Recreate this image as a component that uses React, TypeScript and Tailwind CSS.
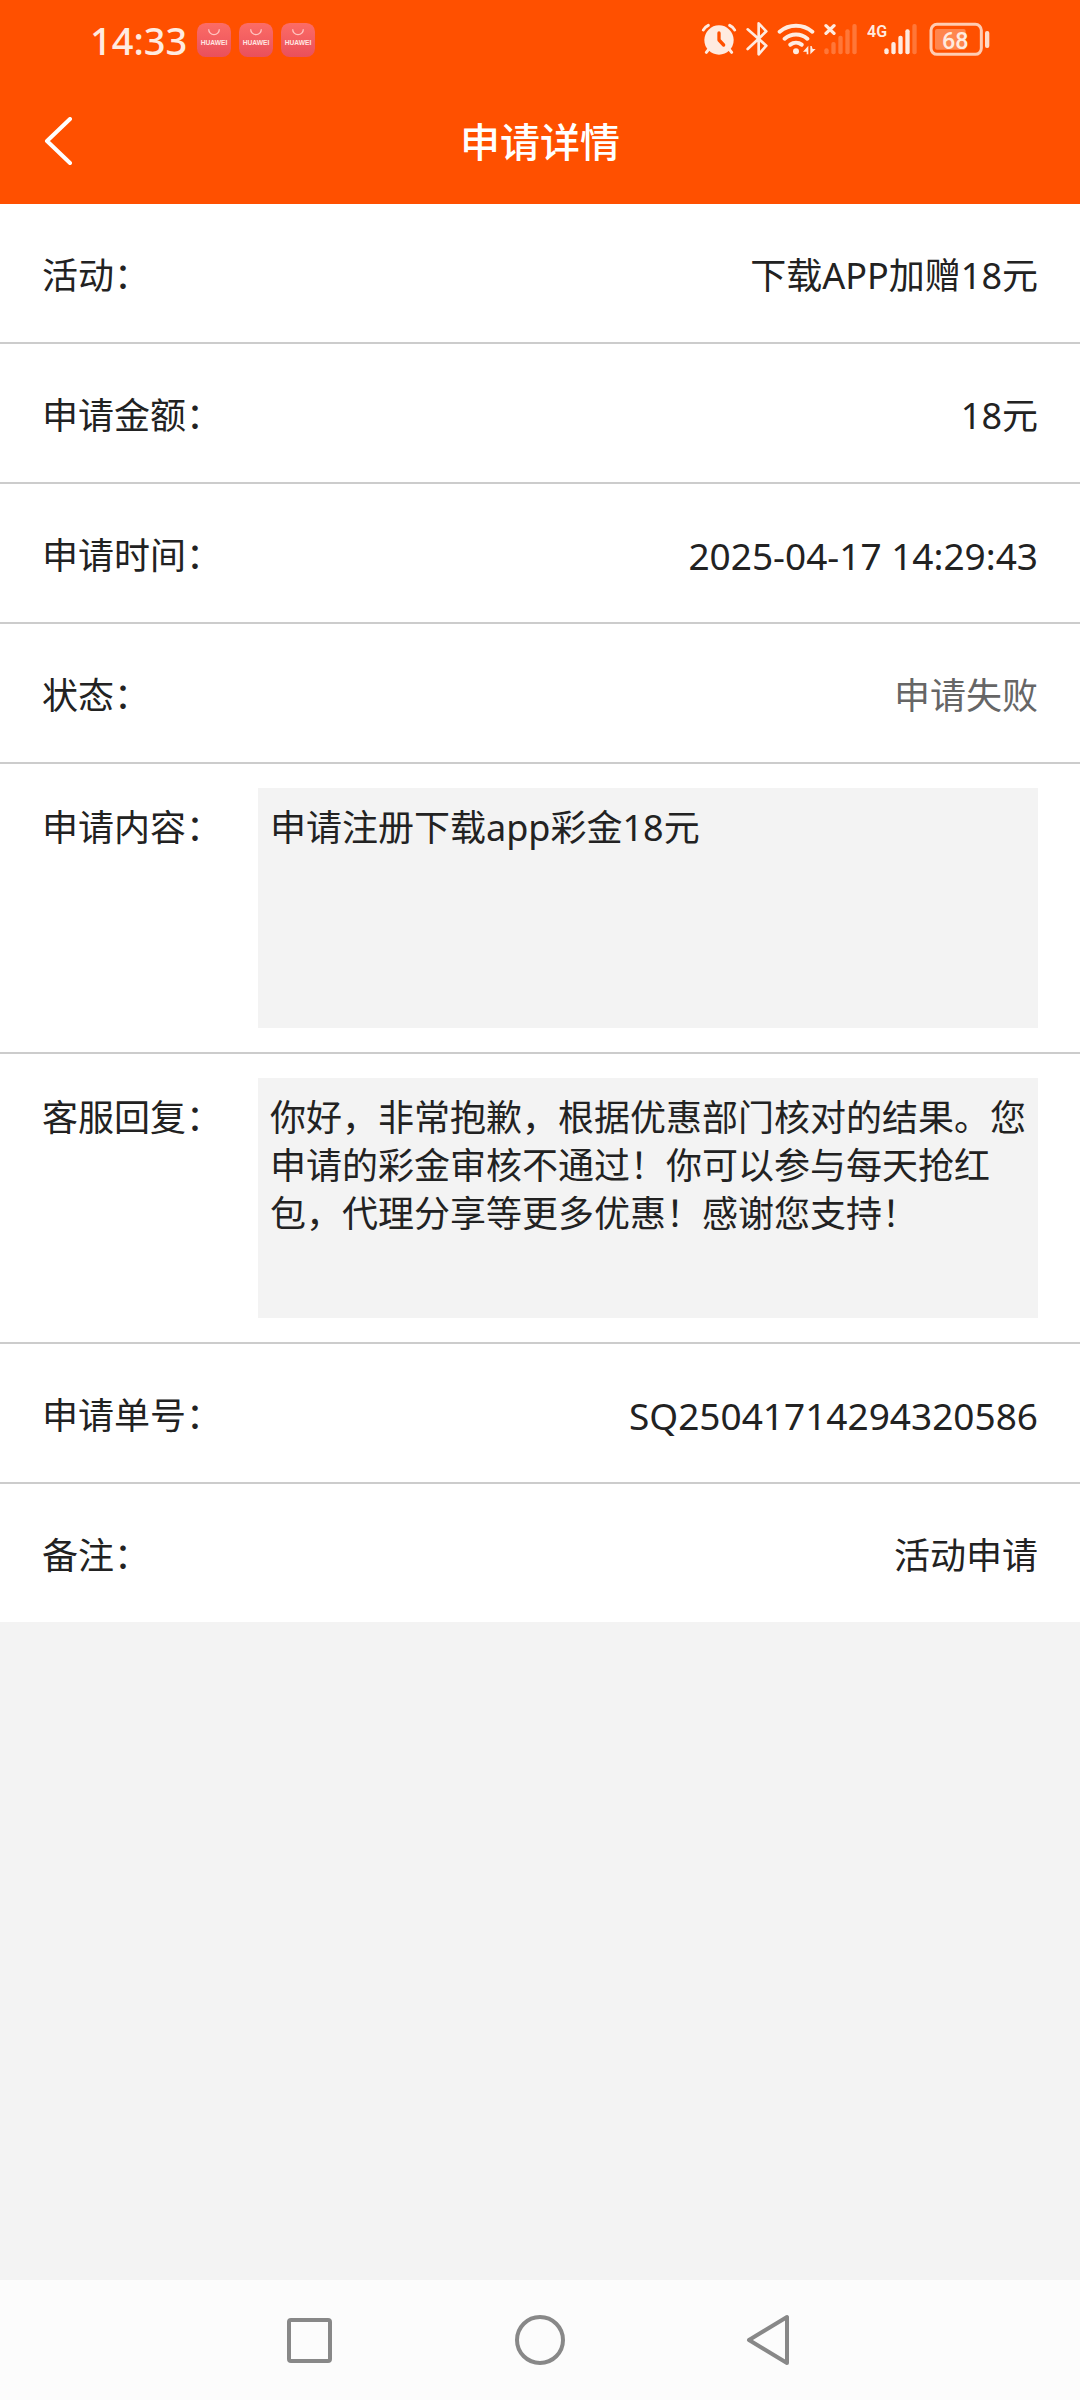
import { useId } from 'react';

type Row = {
  label: string;
  value: string;
  muted?: boolean;
  numeric?: boolean;
  multiline?: boolean;
};

const rows: Row[] = [
  { label: '活动：', value: '下载APP加赠18元' },
  { label: '申请金额：', value: '18元' },
  { label: '申请时间：', value: '2025-04-17 14:29:43', numeric: true },
  { label: '状态：', value: '申请失败', muted: true },
  { label: '申请内容：', value: '申请注册下载app彩金18元', multiline: true },
  {
    label: '客服回复：',
    value:
      '你好，非常抱歉，根据优惠部门核对的结果。您申请的彩金审核不通过！你可以参与每天抢红包，代理分享等更多优惠！感谢您支持！',
    multiline: true,
  },
  { label: '申请单号：', value: 'SQ25041714294320586', numeric: true },
  { label: '备注：', value: '活动申请' },
];

function AppBadge() {
  const gradient = useId();

  return (
    <svg className="w-[34px] h-[34px]" viewBox="0 0 102 102">
      <defs>
        <linearGradient id={gradient} x1="0" y1="0" x2="0" y2="1">
          <stop offset="0" stopColor="#fc6c66" />
          <stop offset="1" stopColor="#e9505c" />
        </linearGradient>
      </defs>
      <rect width="102" height="102" rx="26" fill={`url(#${gradient})`} />
      <path d="M35 19a16 16 0 0 0 32 0" fill="none" stroke="#ffc4c0" strokeWidth="4" />
      <text
        x="51"
        y="66"
        textAnchor="middle"
        fontSize="20"
        fontWeight="700"
        fill="#ffe6e2"
        fontFamily="Liberation Sans, sans-serif"
      >
        HUAWEI
      </text>
    </svg>
  );
}

function AlarmIcon() {
  return (
    <svg className="w-9 h-9" viewBox="63 66 108 108" fill="none" stroke="currentColor" strokeLinecap="round">
      <circle cx="117" cy="120" r="44" fill="currentColor" stroke="none" />
      <path d="M70 90q4-9 15-14M149 76q11 5 15 14" strokeWidth="9" />
      <path d="M86 148l-7 9M148 148l7 9" strokeWidth="9" />
      <path d="M117 99v21l14 15" stroke="#ff5000" strokeWidth="10" strokeLinejoin="round" />
    </svg>
  );
}

function BluetoothIcon() {
  return (
    <svg className="w-6 h-9" viewBox="195 66 72 108" fill="none" stroke="currentColor">
      <path
        d="M203 88l56 49-23 26V70l23 24-56 53"
        strokeWidth="8"
        strokeLinecap="round"
        strokeLinejoin="round"
      />
    </svg>
  );
}

function WifiIcon() {
  return (
    <svg className="w-[39px] h-9" viewBox="291 66 117 108" fill="none" stroke="currentColor">
      <path
        d="M299 95c28-24 70-24 98 0M314 116c19-17 49-17 68 0M331 134c10-8 24-8 34 0"
        strokeWidth="12"
        strokeLinecap="round"
      />
      <circle cx="348" cy="154" r="9" fill="currentColor" stroke="none" />
      <path d="M369 155l16-18v26h-5v-8zM391 138v25l16-16h-9l-3-9z" fill="currentColor" stroke="none" />
    </svg>
  );
}

function SignalBars({ x, active }: { x: number; active: number }) {
  const tops = [145, 126, 107, 88, 72];
  return (
    <>
      {tops.map((top, i) => (
        <rect
          key={top}
          x={x + i * 21}
          y={top}
          width="13"
          height={163 - top}
          rx="6"
          fill="currentColor"
          opacity={i < active ? 1 : 0.25}
        />
      ))}
    </>
  );
}

function StatusBar() {
  return (
    <div className="flex h-20 items-center justify-between px-[90px] text-[#ffebe0]">
      <div className="flex items-center gap-2">
        <span className="w-[99px] text-[38px] leading-none font-medium">14:33</span>
        <AppBadge />
        <AppBadge />
        <AppBadge />
      </div>

      <div className="flex items-center gap-2">
        <AlarmIcon />
        <BluetoothIcon />
        <WifiIcon />

        {/* SIM 1: no service */}
        <svg className="w-[35px] h-9" viewBox="431 66 105 108">
          <path d="M437 77l24 23M461 77l-24 23" stroke="currentColor" strokeWidth="10" strokeLinecap="round" />
          <SignalBars x={432} active={0} />
        </svg>

        {/* SIM 2 */}
        <svg className="w-[54px] h-9" viewBox="561 66 162 108">
          <text x="561" y="110" fontSize="48" fontWeight="600" fill="currentColor" fontFamily="Roboto, sans-serif">
            4G
          </text>
          <SignalBars x={613} active={4} />
        </svg>

        <svg className="w-[61px] h-9" viewBox="747 66 183 108">
          <rect x="753" y="73" width="151" height="90" rx="18" fill="none" stroke="currentColor" strokeWidth="9" opacity="0.8" />
          <rect x="765" y="87" width="92" height="62" rx="6" fill="currentColor" opacity="0.35" />
          <rect x="915" y="93" width="13" height="51" rx="6" fill="currentColor" opacity="0.9" />
          <text
            x="826"
            y="146"
            textAnchor="middle"
            fontSize="70"
            fontWeight="500"
            fill="currentColor"
            fontFamily="Roboto, sans-serif"
          >
            68
          </text>
        </svg>
      </div>
    </div>
  );
}

function DetailRow({ label, value, muted, numeric, multiline }: Row) {
  const id = useId();

  if (multiline) {
    return (
      <div className="flex items-start px-[42px] py-6">
        <label htmlFor={id} className="w-[216px] shrink-0 pt-4">
          {label}
        </label>
        <textarea
          id={id}
          readOnly
          value={value}
          className="block h-60 min-w-0 flex-1 resize-none overflow-hidden bg-[#f3f3f3] px-3 pt-4 outline-none"
        />
      </div>
    );
  }

  return (
    <div className="flex items-center justify-between px-[42px] pt-12 pb-[42px]">
      <span>{label}</span>
      <span className={`${muted ? 'text-[#666666]' : ''} ${numeric ? 'text-[37px]' : ''}`}>{value}</span>
    </div>
  );
}

export default function App() {
  return (
    <div className="flex min-h-screen flex-col bg-[#f3f3f3] font-['Noto_Sans','Noto_Sans_CJK_SC',sans-serif] text-[36px] leading-[48px] text-[#222222]">
      <header className="bg-[#ff5000]">
        <StatusBar />
        <div className="grid h-[124px] grid-cols-[1fr_auto_1fr] items-center px-[42px]">
          <button type="button" aria-label="返回" className="justify-self-start">
            <svg className="h-[50px] w-8" viewBox="0 0 32 50" fill="none" stroke="#ffffff" strokeWidth="4" strokeLinecap="round" strokeLinejoin="round">
              <path d="M28 2L5 24l23 22" />
            </svg>
          </button>
          <h1 className="text-[40px] font-medium text-white">申请详情</h1>
        </div>
      </header>

      <main className="flex-1">
        <div className="divide-y-2 divide-[#cccccc] bg-white">
          {rows.map((row) => (
            <DetailRow key={row.label} {...row} />
          ))}
        </div>
      </main>

      {/* System navigation */}
      <nav className="flex h-[120px] items-center bg-[#fcfcfc] px-[18%] text-[#888888]">
        <button type="button" aria-label="最近任务" className="flex flex-1 justify-center">
          <svg className="h-[52px] w-[52px]" viewBox="0 0 52 52" fill="none" stroke="currentColor" strokeWidth="4">
            <rect x="5" y="6" width="41" height="41" rx="2" />
          </svg>
        </button>
        <button type="button" aria-label="主屏幕" className="flex flex-1 justify-center">
          <svg className="h-[52px] w-[52px]" viewBox="0 0 52 52" fill="none" stroke="currentColor" strokeWidth="4">
            <circle cx="26" cy="26" r="23" />
          </svg>
        </button>
        <button type="button" aria-label="返回上一页" className="flex flex-1 justify-center">
          <svg className="h-[52px] w-[52px]" viewBox="0 0 52 52" fill="none" stroke="currentColor" strokeWidth="4" strokeLinejoin="round">
            <path d="M43 3v46L5 26z" />
          </svg>
        </button>
      </nav>
    </div>
  );
}
